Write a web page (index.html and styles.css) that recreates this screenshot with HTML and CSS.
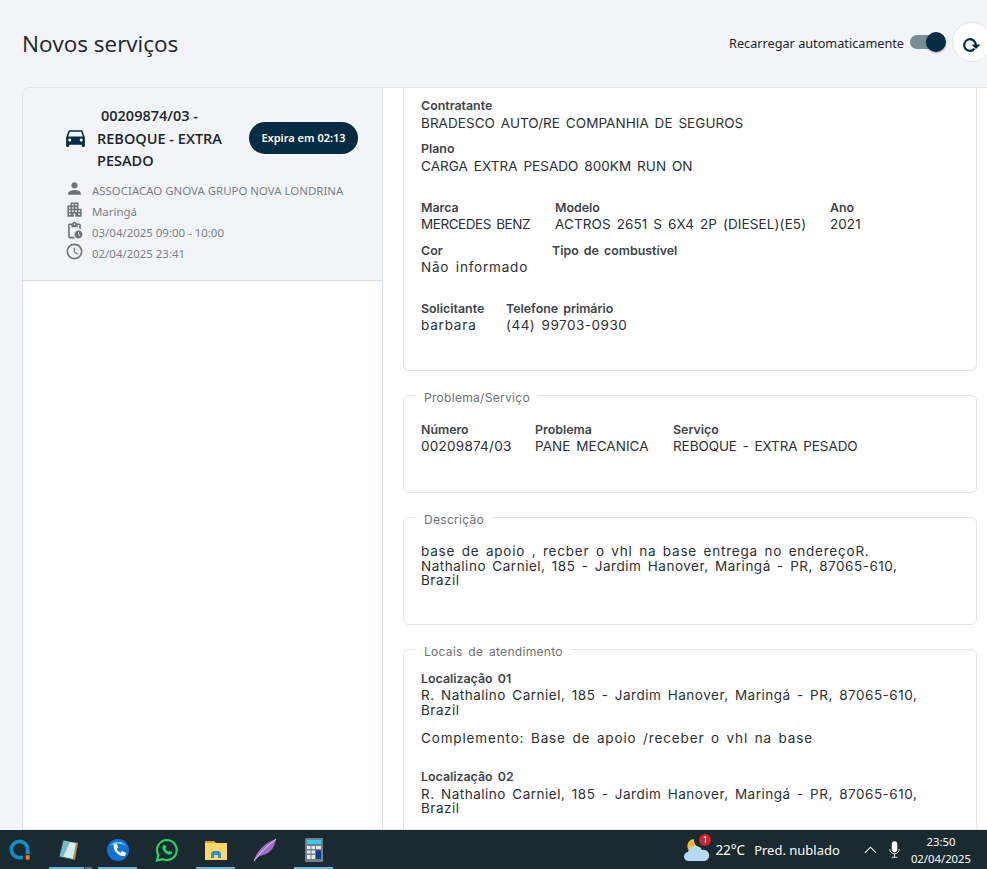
FILE: index.html
```html
<!DOCTYPE html>
<html lang="pt-BR">
<head>
<meta charset="utf-8">
<title>Novos serviços</title>
<link rel="stylesheet" href="styles.css">
</head>
<body>
<div class="app">
  <header class="topbar">
    <h1 class="page-title">Novos serviços</h1>
    <div class="reload">
      <span class="reload-label">Recarregar automaticamente</span>
      <span class="switch"><span class="switch-knob"></span></span>
      <button class="refresh" aria-label="Recarregar">
        <svg viewBox="0 0 20 20" width="20" height="20"><path class="refresh-arc" d="M13.800 10A5.800 5.800 0 1 0 12.500 13.700"/><path class="refresh-head" d="M9.500 9.500h9l-4.500 4.500z"/></svg>
      </button>
    </div>
  </header>
  <main class="content">
    <aside class="list">
      <article class="service-card">
        <div class="card-head">
          <svg class="car" viewBox="0 0 24 24"><path d="M18.92 6.010C18.720 5.420 18.160 5 17.500 5h-11c-.66 0-1.210.42-1.420 1.010L3 12v8c0 .55.45 1 1 1h1c.55 0 1-.45 1-1v-1h12v1c0 .55.45 1 1 1h1c.55 0 1-.45 1-1v-8l-2.080-5.990zM6.500 16c-.83 0-1.500-.67-1.500-1.500S5.670 13 6.500 13s1.500.67 1.500 1.500S7.330 16 6.500 16zm11 0c-.83 0-1.500-.67-1.500-1.500s.67-1.500 1.500-1.500 1.500.67 1.500 1.500-.67 1.500-1.500 1.500zM5 11l1.500-4.500h11L19 11H5z"/></svg>
          <div class="card-title">00209874/03 - REBOQUE - EXTRA PESADO</div>
          <span class="expire">Expira em 02:13</span>
        </div>
        <ul class="meta">
          <li><svg viewBox="0 0 24 24"><path d="M12 12c2.210 0 4-1.790 4-4s-1.790-4-4-4-4 1.790-4 4 1.790 4 4 4zm0 2c-2.670 0-8 1.340-8 4v2h16v-2c0-2.660-5.330-4-8-4z"/></svg>ASSOCIACAO GNOVA GRUPO NOVA LONDRINA</li>
          <li><svg viewBox="0 0 24 24"><path d="M17 11V3H7v4H3v14h8v-4h2v4h8V11h-4zM7 19H5v-2h2v2zm0-4H5v-2h2v2zm0-4H5V9h2v2zm4 4H9v-2h2v2zm0-4H9V9h2v2zm0-4H9V5h2v2zm4 8h-2v-2h2v2zm0-4h-2V9h2v2zm0-4h-2V5h2v2zm4 12h-2v-2h2v2zm0-4h-2v-2h2v2z"/></svg>Maringá</li>
          <li><svg viewBox="0 0 24 24"><path d="M17 12c-2.760 0-5 2.240-5 5s2.240 5 5 5 5-2.240 5-5-2.240-5-5-5zm1.650 7.350L16.500 17.200V14h1v2.790l1.850 1.850-.7.71zM18 3h-3.180C14.400 1.840 13.300 1 12 1s-2.400.84-2.820 2H6c-1.100 0-2 .9-2 2v15c0 1.100.9 2 2 2h6v-2H6V5h2v3h8V5h2v5h2V5c0-1.100-.9-2-2-2zm-6 2c-.55 0-1-.45-1-1s.45-1 1-1 1 .45 1 1-.45 1-1 1z"/></svg>03/04/2025 09:00 - 10:00</li>
          <li><svg viewBox="0 0 24 24"><path d="M11.990 2C6.470 2 2 6.480 2 12s4.470 10 9.990 10C17.520 22 22 17.520 22 12S17.520 2 11.990 2zM12 20c-4.420 0-8-3.580-8-8s3.580-8 8-8 8 3.580 8 8-3.580 8-8 8zm.5-13H11v6l5.250 3.150.75-1.230-4.500-2.670z"/></svg>02/04/2025 23:41</li>
        </ul>
      </article>
    </aside>
    <section class="details">
      <div class="box box-first">
        <div class="field"><div class="label">Contratante</div><div class="value">BRADESCO AUTO/RE COMPANHIA DE SEGUROS</div></div>
        <div class="field"><div class="label">Plano</div><div class="value">CARGA EXTRA PESADO 800KM RUN ON</div></div>
        <div class="row cols-vehicle">
          <div class="field"><div class="label">Marca</div><div class="value value-tight">MERCEDES BENZ</div></div>
          <div class="field"><div class="label">Modelo</div><div class="value value-model">ACTROS 2651 S 6X4 2P (DIESEL)(E5)</div></div>
          <div class="field"><div class="label">Ano</div><div class="value">2021</div></div>
        </div>
        <div class="row cols-fuel">
          <div class="field"><div class="label">Cor</div><div class="value value-wide">Não informado</div></div>
          <div class="field"><div class="label">Tipo de combustível</div></div>
        </div>
        <div class="row cols-contact">
          <div class="field"><div class="label">Solicitante</div><div class="value value-wide">barbara</div></div>
          <div class="field"><div class="label">Telefone primário</div><div class="value value-phone">(44) 99703-0930</div></div>
        </div>
      </div>
      <fieldset class="box box-problem">
        <legend>Problema/Serviço</legend>
        <div class="row cols-problem">
          <div class="field"><div class="label">Número</div><div class="value value-number">00209874/03</div></div>
          <div class="field"><div class="label">Problema</div><div class="value">PANE MECANICA</div></div>
          <div class="field"><div class="label">Serviço</div><div class="value value-service">REBOQUE - EXTRA PESADO</div></div>
        </div>
      </fieldset>
      <fieldset class="box box-desc">
        <legend>Descrição</legend>
        <p class="text"><span class="text-lead">base de apoio , recber o vhl na base entrega no endereçoR.</span> Nathalino Carniel, 185 - Jardim Hanover, Maringá - PR, 87065-610, Brazil</p>
      </fieldset>
      <fieldset class="box box-local">
        <legend>Locais de atendimento</legend>
        <div class="label">Localização 01</div>
        <p class="text">R. Nathalino Carniel, 185 - Jardim Hanover, Maringá - PR, 87065-610, Brazil</p>
        <p class="text text-note">Complemento: Base de apoio /receber o vhl na base</p>
        <div class="label label-next">Localização 02</div>
        <p class="text">R. Nathalino Carniel, 185 - Jardim Hanover, Maringá - PR, 87065-610, Brazil</p>
      </fieldset>
    </section>
  </main>
  <footer class="taskbar">
    <div class="tb-apps">
      <span class="tb-app"><svg class="tb-logo" viewBox="0 0 24 24"><path d="M12 1.500a10.500 10.500 0 1 0 0 21h3.500v-4H12a6.500 6.500 0 1 1 6.500-6.500v5h4v-5A10.500 10.500 0 0 0 12 1.500z" fill="#0e8fc4"/><rect x="18.500" y="18" width="4" height="4.500" fill="#f58220"/></svg></span>
      <span class="tb-app tb-on tb-stack"><svg viewBox="0 0 24 24"><path d="M6 2l14 3-3 17-15-3z" fill="#2f6f78"/><path d="M19 4l2 1-3 17-2-1z" fill="#b78a4e"/><path d="M7 3l12 2-3 16L3 18z" fill="#d5ecee"/><path d="M7 3l6 1-7 15-3-1z" fill="#7fb8c0"/></svg></span>
      <span class="tb-app tb-on"><svg viewBox="0 0 24 24"><circle cx="12" cy="12" r="11" fill="#1273d4"/><path d="M4 8a9 8 0 0 1 16 0c-4-3-12-3-16 0z" fill="#6cc0f2"/><path d="M7.500 6.500l3-1 2 4-1.700 1.500c.8 1.800 2 3 3.700 3.700l1.500-1.700 4 2-1 3c-6 1-12-5-11.500-11.500z" fill="#fff"/></svg></span>
      <span class="tb-app"><svg viewBox="0 0 24 24"><path d="M12 2a10 10 0 0 0-8.600 15L2 22.500l5.600-1.400A10 10 0 1 0 12 2z" fill="none" stroke="#25d366" stroke-width="2.200"/><path d="M8.500 7l1.500-.3 1.300 2.800-1 1.200c.7 1.400 1.700 2.400 3 3l1.200-1 2.700 1.300-.3 1.500c-1 1.300-3 1.500-5 .5-2.500-1.300-4-3.300-4.500-5.500-.2-1.500.3-3 1.600-3.500z" fill="#25d366"/></svg></span>
      <span class="tb-app tb-on"><svg viewBox="0 0 24 24"><path d="M1 3h9l2 2h11v17H1z" fill="#ffd76a"/><path d="M1 3h9l2 2H1z" fill="#e0a030"/><path d="M7 20v-5l2-2h6l2 2v5h-3v-3h-4v3z" fill="#2c8fd8"/></svg></span>
      <span class="tb-app"><svg viewBox="0 0 24 24"><path d="M1 23C3 14 11 5 23 1c-1 7-5 13-10 15-3 1-6 2-8 3z" fill="#a070c8"/><path d="M1 23C7 15 13 9 23 1" fill="none" stroke="#e0d0f0" stroke-width="1"/></svg></span>
      <span class="tb-app tb-on"><svg viewBox="0 0 24 24"><rect x="3" y="0" width="18" height="24" rx="1" fill="#6d7f88"/><rect x="5" y="2" width="14" height="4" fill="#3fc4ea"/><path d="M5 8h3.500v3H5zM9.500 8H13v3H9.500zM14 8h5v3h-5zM5 12.500h3.500v3H5zM9.500 12.500H13v3H9.500zM5 17h3.500v4H5zM9.500 17H13v4H9.500z" fill="#e4e9ec"/><rect x="14" y="12.500" width="5" height="8.500" fill="#123d80"/></svg></span>
    </div>
    <div class="tb-tray">
      <span class="weather">
        <svg viewBox="0 0 26 26"><path d="M10 2a7 7 0 1 0 7 9 8 8 0 0 1-7-9z" fill="#f5b73a"/><path d="M5 24a4.500 4.500 0 0 1-1-9 7.500 7.500 0 0 1 14-2 5.500 5.500 0 0 1 3 11z" fill="#b9d8f5"/></svg>
        <span class="weather-badge">1</span>
      </span>
      <span class="tb-temp">22°C</span>
      <span class="tb-cond">Pred. nublado</span>
      <svg class="tb-chevron" viewBox="0 0 14 8"><path d="M1 7l6-6 6 6" fill="none" stroke="#fff" stroke-width="1.200"/></svg>
      <svg class="tb-mic" viewBox="0 0 12 18"><rect x="3" y="0" width="6" height="12" rx="3" fill="#fff"/><path d="M.8 8.500a5.200 5.200 0 0 0 10.400 0M6 14v3M3 17.500h6" fill="none" stroke="#fff" stroke-width="1"/></svg>
      <div class="tb-clock"><span>23:50</span><span>02/04/2025</span></div>
    </div>
  </footer>
</div>
</body>
</html>
```

FILE: styles.css
```css
* { box-sizing: border-box; }
html, body { margin: 0; height: 100%; }
body { background: #f3f4f9; font-family: "Open Sans", "Liberation Sans", sans-serif; overflow: hidden; }
.app { height: 869px; display: flex; flex-direction: column; }

.topbar { height: 87px; padding: 0 0 3px 22px; display: flex; align-items: center; justify-content: space-between; flex: none; }
.page-title { margin: 3px 0 0; font-size: 22.500px; font-weight: 400; color: #20242a; font-family: "Open Sans", sans-serif; }
.reload { display: flex; align-items: center; margin-right: -5px; }
.reload-label { font-size: 12.700px; margin-top: 1px; color: #20242a; font-family: "Noto Sans", sans-serif; }
.switch { width: 34px; height: 14px; margin-left: 6px; border-radius: 7px; background: #7a8c99; position: relative; }
.switch-knob { position: absolute; right: -2px; top: -3px; width: 20px; height: 20px; border-radius: 50%; background: #042c43; box-shadow: 0 1px 2px rgba(0,0,0,.3); }
.refresh { width: 40px; height: 40px; margin-left: 8px; border-radius: 50%; border: 1px solid #e4e6ea; background: #fff; padding: 6px 0 0; display: flex; align-items: center; justify-content: center; }
.refresh-arc { fill: none; stroke: #042c43; stroke-width: 2.200; }
.refresh-head { fill: #042c43; }

.content { flex: 1; min-height: 0; display: flex; padding-left: 22px; overflow: hidden; }
.list { width: 361px; flex: none; background: #fff; border: 1px solid #dbe3ee; border-top-left-radius: 8px; }
.service-card { height: 193px; background: #f3f4f9; border-bottom: 1px solid #d9dde3; padding: 16px 24px 0 40px; border-top-left-radius: 8px; }
.card-head { display: flex; align-items: center; }
.car { width: 25px; height: 25px; margin-bottom: 2px; fill: #042c43; flex: none; }
.card-title { width: 135px; margin-left: 9px; flex: none; padding-top: 1px; font: 600 14.500px/22.500px "Open Sans", sans-serif; color: #20242a; text-indent: 4px; }
.expire { margin-left: 17px; height: 32px; width: 109px; flex: none; border-radius: 16px; background: #042c43; color: #fff; font: 600 11px/32px "Noto Sans", sans-serif; text-align: center; white-space: nowrap; }
.meta { list-style: none; margin: 7px 0 0; padding: 0 0 0 2px; }
.meta li { display: flex; align-items: center; height: 21px; font: 400 11.450px/21px "Noto Sans", sans-serif; color: #7b7f86; white-space: nowrap; }
.meta svg { width: 19px; height: 19px; fill: #6f7379; margin: 0 8px 3px 0; flex: none; }

.details { flex: 1; min-width: 0; background: #fff; padding: 0 10px 0 20px; border: 1px solid #dbe3ee; border-width: 1px 0 1px 1px; margin-left: -1px; overflow: hidden; font-family: "Inter", sans-serif; }
.box { margin: 0 0 24px; border: 1px solid #e2e4e8; border-radius: 6px; padding: 0 17px; min-width: 0; display: block; }
.box-first { height: 283px; border-top: 0; border-top-left-radius: 0; border-top-right-radius: 0; padding-top: 9px; }
.box-first > .field { margin-bottom: 8px; }
.box-first > .field .value { margin-top: 1px; }
.box-problem { height: 109px; padding-top: 15px; margin-top: -11px; }
.box-desc { height: 119px; padding-top: 16px; margin-top: -11px; }
.box-local { height: 200px; padding-top: 10px; margin-top: -11px; }
legend { margin-left: -6px; padding: 6px 8px 0 9px; font-size: 12.100px; line-height: 16px; color: #6e7176; letter-spacing: .25px; }
.box-local legend { word-spacing: 2px; }
.row { display: grid; column-gap: 24px; }
.cols-vehicle { grid-template-columns: 110px 251px auto; margin-top: 24px; }
.cols-fuel { grid-template-columns: 107px auto; }
.cols-contact { grid-template-columns: 61px auto; margin-top: 15px; }
.cols-problem { grid-template-columns: 90px 114px auto; }
.field { margin-bottom: 9px; }
.label { font-size: 12.400px; line-height: 17px; font-weight: 600; color: #40444a; white-space: nowrap; word-spacing: 2px; }
.value { font-size: 13.500px; line-height: 17px; color: #2c3034; white-space: nowrap; letter-spacing: .05px; word-spacing: 2px; }
.value-tight { letter-spacing: -.45px; }
.value-wide { letter-spacing: .8px; }
.value-phone { letter-spacing: .5px; }
.value-model { letter-spacing: .11px; }
.value-number { letter-spacing: .25px; }
.value-service { letter-spacing: -.08px; }
.text { margin: 0; font-size: 13.500px; line-height: 14.500px; color: #2c3034; letter-spacing: .52px; word-spacing: 2px; max-width: 500px; }
.text-lead { letter-spacing: .78px; }
.label + .text { margin-top: 1px; }
.text-note { margin-top: 14px; letter-spacing: .85px; }
.label-next { margin-top: 22px; }
.label-next + .text { margin-top: 2px; }

.taskbar { height: 39px; flex: none; background: #1a2a30; display: flex; justify-content: space-between; align-items: center; color: #fff; font-family: "Noto Sans", sans-serif; }
.tb-apps { display: flex; margin-left: -5px; }
.tb-app { width: 49px; height: 39px; display: flex; align-items: center; justify-content: center; position: relative; }
.tb-app svg { width: 24px; height: 24px; }
.tb-app .tb-logo { width: 23px; height: 23px; }
.tb-on::after { content: ""; position: absolute; left: 5px; right: 5px; bottom: 0; height: 2px; background: #64b5e8; }
.tb-stack::after { right: 9px; }
.tb-stack::before { content: ""; position: absolute; left: 41px; right: 1px; bottom: 0; height: 2px; background: #4d7f96; }
.tb-tray { display: flex; align-items: center; padding-right: 16px; }
.weather { position: relative; width: 26px; height: 26px; display: block; }
.weather svg { width: 26px; height: 26px; display: block; }
.weather-badge { position: absolute; right: -1px; top: -3px; width: 12px; height: 12px; border-radius: 50%; background: #c9252d; font-size: 8px; line-height: 12px; text-align: center; color: #fff; }
.tb-temp { margin-left: 5px; font-size: 13.500px; }
.tb-cond { margin-left: 9px; font-size: 13px; }
.tb-chevron { width: 13px; height: 8px; margin-left: 24px; }
.tb-mic { width: 11px; height: 17px; margin-left: 12px; }
.tb-clock { margin-left: 11px; display: flex; flex-direction: column; align-items: center; font-size: 11.300px; line-height: 17px; }
```
